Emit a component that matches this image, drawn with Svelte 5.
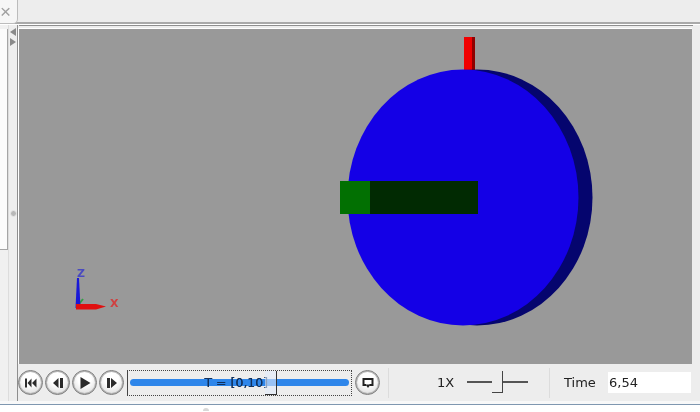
<script>
  const buttons = [
    { id: 'first', d: 'M-6 -4.500h2v9h-2zM-3.500 0l4-4.500v9zM1 0l4.500-4.500v9z' },
    { id: 'back', d: 'M-5 0l5.500-5v10zM2 -5h3v10h-3z' },
    { id: 'play', d: 'M-4.500 -6l10 6l-10 6z' },
    { id: 'step', d: 'M-5 -5h3v10h-3zM-1 -5l6 5l-6 5z' }
  ];
</script>

<div class="page">
  <div class="tabs">
    <div class="tab"><span class="close">×</span></div>
  </div>
  <div class="main">
    <div class="side">
      <div class="panel"></div>
    </div>
    <div class="divider">
      <span class="arrow left"></span>
      <span class="arrow right"></span>
      <span class="grip"></span>
    </div>
    <div class="viewer">
      <svg class="scene" viewBox="0 0 673 335" aria-label="3D scene">
        <rect x="445" y="8" width="11" height="34" fill="#f00000" />
        <rect x="453" y="8" width="3" height="34" fill="#900000" />
        <ellipse cx="458" cy="168.500" rx="115.500" ry="128" fill="#05056e" />
        <ellipse cx="444" cy="168.500" rx="115.500" ry="128" fill="#1400e6" />
        <rect x="321" y="152" width="31" height="33" fill="#027002" />
        <rect x="351" y="152" width="108" height="33" fill="#012a02" />
        <path d="M60 275l4-5" stroke="#30a040" stroke-width="2" fill="none" />
        <path d="M56.500 279l1.500-30l2 0l1.500 30z" fill="#1818d8" />
        <path d="M57 275h20l10 2.500l-10 3h-20z" fill="#e01010" />
        <text x="58" y="248" class="axis z">Z</text>
        <text x="91" y="278" class="axis x">X</text>
      </svg>
      <div class="toolbar">
        <div class="transport">
          {#each buttons as b (b.id)}
            <span class="round">
              <svg viewBox="-8 -8 16 16" width="16" height="16"><path d={b.d} fill="#2c2c2c" /></svg>
            </span>
          {/each}
        </div>
        <div class="range">
          <div class="bar"></div>
          <span class="range-label">T = [0,10]</span>
          <span class="thumb"></span>
        </div>
        <span class="round loop">
          <svg viewBox="-8 -8 16 16" width="16" height="16">
            <path d="M-5.500 -5h11v8h-4v-2h2v-4h-7v4h1.500v2h-3.500z" fill="#222" />
            <path d="M-2.500 1.500h5l-2.500 3.500z" fill="#222" />
          </svg>
        </span>
        <span class="sep first"></span>
        <span class="speed">1X</span>
        <div class="slider">
          <span class="track"></span>
          <span class="knob"></span>
        </div>
        <span class="sep second"></span>
        <span class="time-label">Time</span>
        <input class="time" value="6,54" readonly />
      </div>
    </div>
    <div class="right-edge"></div>
  </div>
  <div class="rule"></div>
  <div class="foot"><span class="foot-dot"></span></div>
</div>

<style>
  :global(body) {
    margin: 0;
    background: #fff;
  }
  .page {
    width: 700px;
    height: 412px;
    display: flex;
    flex-direction: column;
    overflow: hidden;
    font-family: "DejaVu Sans", "Liberation Sans", sans-serif;
    color: #222;
    filter: blur(0.45px);
  }
  .tabs {
    height: 22px;
    flex: none;
    background: #ededed;
    border-bottom: 2px solid #a9a9a9;
    position: relative;
  }
  .tab {
    width: 17px;
    height: 23px;
    background: #f6f6f6;
    border-right: 1px solid #bcbcbc;
    border-bottom: 1px solid #bcbcbc;
    border-bottom-right-radius: 5px;
    position: relative;
    z-index: 1;
    display: flex;
    align-items: center;
  }
  .close {
    font-size: 19px;
    line-height: 22px;
    color: #a0a0a0;
    font-family: "Liberation Sans", sans-serif;
  }
  .main {
    height: 376px;
    flex: none;
    display: flex;
    background: #ededed;
    border-top: 1px solid #fff;
  }
  .rule {
    height: 3px;
    flex: none;
    background: #f8f8f8;
    border-bottom: 1px solid #7f97b0;
  }
  .side {
    width: 8px;
    flex: none;
    padding-top: 4px;
    background: #f0f0f0;
  }
  .panel {
    height: 220px;
    background: #fbfbfb;
    border-right: 1px solid #a5a5a5;
    border-bottom: 1px solid #a5a5a5;
  }
  .divider {
    width: 8px;
    flex: none;
    background: #eeeeee;
    border-right: 1px solid #8e8e8e;
    border-left: 1px solid #dcdcdc;
    position: relative;
    display: flex;
    flex-direction: column;
    align-items: center;
    padding-top: 3px;
    gap: 2px;
  }
  .arrow {
    width: 0;
    height: 0;
    border-top: 4px solid transparent;
    border-bottom: 4px solid transparent;
  }
  .arrow.left {
    border-right: 6px solid #8a8a8a;
  }
  .arrow.right {
    border-left: 6px solid #8a8a8a;
  }
  .grip {
    position: absolute;
    top: 185px;
    left: 1px;
    width: 5px;
    height: 5px;
    border-radius: 50%;
    background: #b8b8b8;
    border: 1px solid #e8e8e8;
  }
  .viewer {
    width: 674px;
    flex: none;
    display: flex;
    flex-direction: column;
    padding-top: 2px;
    margin-left: 1px;
    box-sizing: border-box;
    border-top: 1px solid #8f8f8f;
  }
  .scene {
    display: block;
    width: 673px;
    height: 335px;
    flex: none;
    background: #999999;
    border-left: 1px solid #fff;
    border-top: 1px solid #fff;
    box-sizing: content-box;
    margin-left: -1px;
  }
  .axis {
    font-family: "DejaVu Sans", sans-serif;
    font-size: 11px;
    font-weight: 700;
  }
  .z {
    fill: #4a4ac0;
  }
  .x {
    fill: #d04040;
  }
  .toolbar {
    flex: 1;
    display: flex;
    align-items: center;
    min-height: 0;
    font-size: 13px;
  }
  .transport {
    display: flex;
    gap: 2px;
    margin-left: -1px;
  }
  .round {
    width: 25px;
    height: 25px;
    box-sizing: border-box;
    border-radius: 50%;
    border: 1px solid #7c7c7c;
    box-shadow: inset 0 0 0 1px #b4b4b4;
    background: radial-gradient(circle at 50% 35%, #ffffff 35%, #cfcfcf 100%);
    display: flex;
    align-items: center;
    justify-content: center;
    flex: none;
  }
  .range {
    width: 225px;
    height: 26px;
    box-sizing: border-box;
    margin-left: 3px;
    border: 1px dotted #444;
    border-left: 1px solid #444;
    position: relative;
    display: flex;
    align-items: center;
    justify-content: center;
    flex: none;
  }
  .bar {
    position: absolute;
    left: 2px;
    right: 2px;
    top: 8px;
    height: 7px;
    border-radius: 4px;
    background: #2e86ea;
  }
  .range-label {
    position: relative;
    font-size: 12.500px;
    color: #12305a;
    width: 72px;
    white-space: nowrap;
    overflow: hidden;
    padding-left: 2px;
    text-shadow: 0 0 0.5px #12305a;
  }
  .thumb {
    position: absolute;
    left: 137px;
    top: 0;
    width: 11px;
    height: 23px;
    border-right: 1.500px solid #333;
    border-bottom: 1.500px solid #333;
    background: rgba(225, 235, 250, 0.6);
  }
  .loop {
    margin-left: 3px;
  }
  .sep {
    width: 1px;
    height: 30px;
    background: #dcdcdc;
    flex: none;
  }
  .sep.first {
    margin-left: 8px;
  }
  .speed {
    margin-left: 48px;
    width: 30px;
    flex: none;
  }
  .slider {
    width: 61px;
    height: 24px;
    position: relative;
    flex: none;
  }
  .track {
    position: absolute;
    left: 0;
    right: 0;
    top: 10px;
    height: 2px;
    background: #555;
  }
  .knob {
    position: absolute;
    left: 25px;
    top: 0;
    width: 10px;
    height: 21px;
    background: #ededed;
    border-right: 1.500px solid #444;
    border-bottom: 1.500px solid #444;
  }
  .sep.second {
    margin-left: 21px;
  }
  .time-label {
    margin-left: 14px;
    width: 44px;
    flex: none;
  }
  .time {
    width: 83px;
    height: 21px;
    box-sizing: border-box;
    border: 0;
    padding: 0 1px;
    font: inherit;
    color: #222;
    background: #fff;
    outline: none;
    flex: none;
  }
  .right-edge {
    flex: 1;
    background: #ededed;
  }
  .foot {
    flex: 1;
    background: #fff;
    position: relative;
  }
  .foot-dot {
    position: absolute;
    left: 203px;
    top: 3px;
    width: 6px;
    height: 3px;
    border-radius: 3px 3px 0 0;
    background: #d8d8d8;
  }
</style>
